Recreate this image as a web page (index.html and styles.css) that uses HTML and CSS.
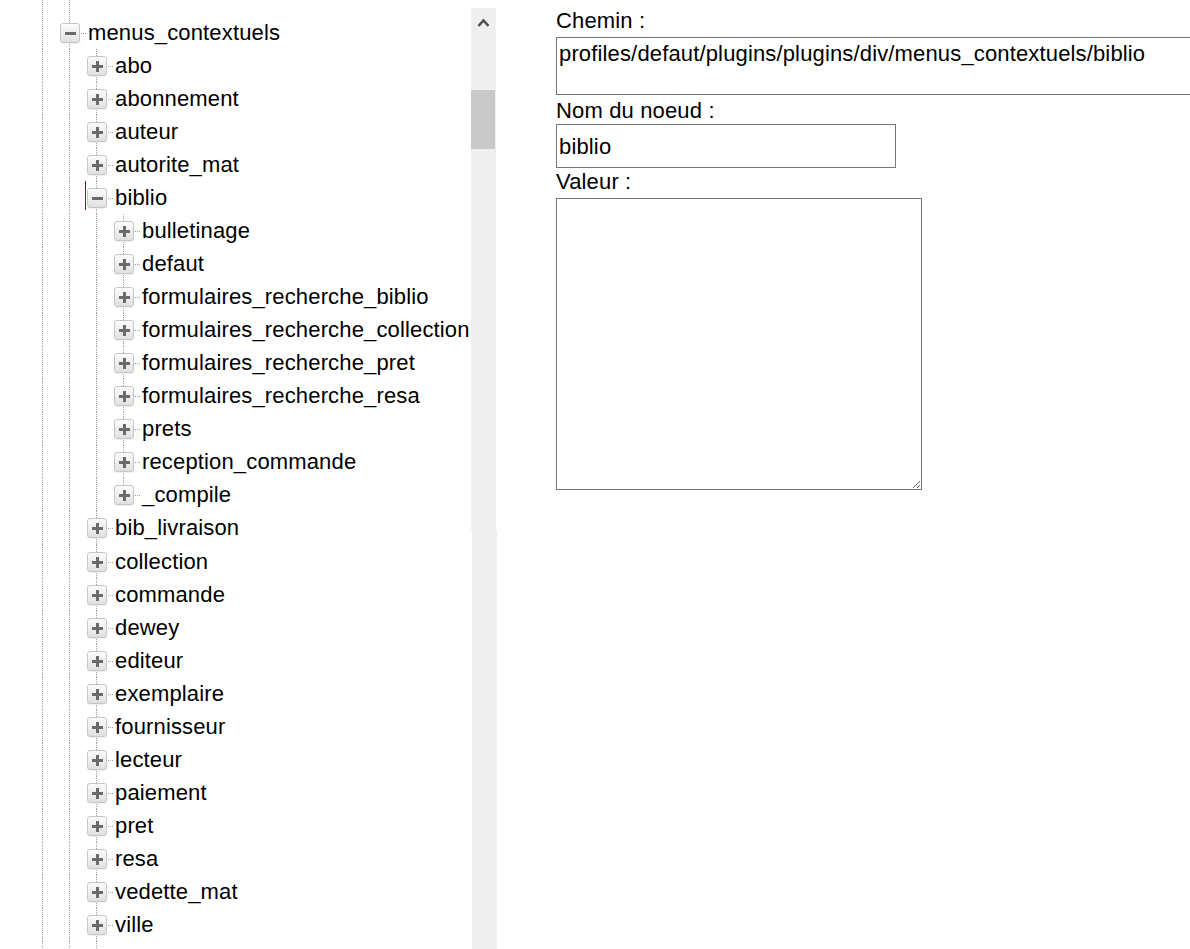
FILE: index.html
```html
<!DOCTYPE html>
<html lang="fr">
<head>
<meta charset="utf-8">
<title>Arbre des menus contextuels</title>
<link rel="stylesheet" href="styles.css">
</head>
<body>
<div class="page">
  <div class="left">
    <div class="tree">
      <div class="spacer top"><span class="g on"></span><span class="g on"></span></div>

      <div class="row"><span class="g on"></span><span class="x"><span class="ic minus"></span></span><span class="lb">menus_contextuels</span></div>

      <div class="row"><span class="g on"></span><span class="g on"></span><span class="x"><span class="ic plus"></span></span><span class="lb">abo</span></div>
      <div class="row"><span class="g on"></span><span class="g on"></span><span class="x"><span class="ic plus"></span></span><span class="lb">abonnement</span></div>
      <div class="row"><span class="g on"></span><span class="g on"></span><span class="x"><span class="ic plus"></span></span><span class="lb">auteur</span></div>
      <div class="row"><span class="g on"></span><span class="g on"></span><span class="x"><span class="ic plus"></span></span><span class="lb">autorite_mat</span></div>
      <div class="row"><span class="g on"></span><span class="g on cur"></span><span class="x"><span class="ic minus"></span></span><span class="lb">biblio</span></div>

      <div class="row"><span class="g on"></span><span class="g on"></span><span class="g on"></span><span class="x"><span class="ic plus"></span></span><span class="lb">bulletinage</span></div>
      <div class="row"><span class="g on"></span><span class="g on"></span><span class="g on"></span><span class="x"><span class="ic plus"></span></span><span class="lb">defaut</span></div>
      <div class="row"><span class="g on"></span><span class="g on"></span><span class="g on"></span><span class="x"><span class="ic plus"></span></span><span class="lb">formulaires_recherche_biblio</span></div>
      <div class="row"><span class="g on"></span><span class="g on"></span><span class="g on"></span><span class="x"><span class="ic plus"></span></span><span class="lb">formulaires_recherche_collection</span></div>
      <div class="row"><span class="g on"></span><span class="g on"></span><span class="g on"></span><span class="x"><span class="ic plus"></span></span><span class="lb">formulaires_recherche_pret</span></div>
      <div class="row"><span class="g on"></span><span class="g on"></span><span class="g on"></span><span class="x"><span class="ic plus"></span></span><span class="lb">formulaires_recherche_resa</span></div>
      <div class="row"><span class="g on"></span><span class="g on"></span><span class="g on"></span><span class="x"><span class="ic plus"></span></span><span class="lb">prets</span></div>
      <div class="row"><span class="g on"></span><span class="g on"></span><span class="g on"></span><span class="x"><span class="ic plus"></span></span><span class="lb">reception_commande</span></div>
      <div class="row"><span class="g on"></span><span class="g on"></span><span class="g on"></span><span class="x last"><span class="ic plus"></span></span><span class="lb">_compile</span></div>

      <div class="row"><span class="g on"></span><span class="g on"></span><span class="x"><span class="ic plus"></span></span><span class="lb">bib_livraison</span></div>
      <div class="gap"><span class="g on"></span><span class="g on"></span><span class="g on"></span></div>
      <div class="row"><span class="g on"></span><span class="g on"></span><span class="x"><span class="ic plus"></span></span><span class="lb">collection</span></div>
      <div class="row"><span class="g on"></span><span class="g on"></span><span class="x"><span class="ic plus"></span></span><span class="lb">commande</span></div>
      <div class="row"><span class="g on"></span><span class="g on"></span><span class="x"><span class="ic plus"></span></span><span class="lb">dewey</span></div>
      <div class="row"><span class="g on"></span><span class="g on"></span><span class="x"><span class="ic plus"></span></span><span class="lb">editeur</span></div>
      <div class="row"><span class="g on"></span><span class="g on"></span><span class="x"><span class="ic plus"></span></span><span class="lb">exemplaire</span></div>
      <div class="row"><span class="g on"></span><span class="g on"></span><span class="x"><span class="ic plus"></span></span><span class="lb">fournisseur</span></div>
      <div class="row"><span class="g on"></span><span class="g on"></span><span class="x"><span class="ic plus"></span></span><span class="lb">lecteur</span></div>
      <div class="row"><span class="g on"></span><span class="g on"></span><span class="x"><span class="ic plus"></span></span><span class="lb">paiement</span></div>
      <div class="row"><span class="g on"></span><span class="g on"></span><span class="x"><span class="ic plus"></span></span><span class="lb">pret</span></div>
      <div class="row"><span class="g on"></span><span class="g on"></span><span class="x"><span class="ic plus"></span></span><span class="lb">resa</span></div>
      <div class="row"><span class="g on"></span><span class="g on"></span><span class="x"><span class="ic plus"></span></span><span class="lb">vedette_mat</span></div>
      <div class="row"><span class="g on"></span><span class="g on"></span><span class="x"><span class="ic plus"></span></span><span class="lb">ville</span></div>
      <div class="spacer bottom"><span class="g on"></span><span class="g on"></span><span class="g on"></span></div>
    </div>
    <div class="sbcol">
      <div class="sb1">
        <div class="sb-arrow">
          <svg width="25" height="28" viewBox="0 0 25 28"><polyline points="7.5,18 12.5,12.5 17.5,18" fill="none" stroke="#505050" stroke-width="2.6" stroke-linejoin="miter"/></svg>
        </div>
        <div class="sb-thumb"></div>
      </div>
      <div class="sb2"></div>
    </div>
  </div>

  <div class="form">
    <label class="lbl" for="chemin">Chemin :</label>
    <textarea id="chemin" class="ta-path">profiles/defaut/plugins/plugins/div/menus_contextuels/biblio</textarea>
    <label class="lbl l2" for="nom">Nom du noeud :</label>
    <input id="nom" class="in-name" type="text" value="biblio">
    <label class="lbl l3" for="valeur">Valeur :</label>
    <textarea id="valeur" class="ta-value"></textarea>
  </div>
</div>
</body>
</html>
```
FILE: styles.css
```css
html, body {
  margin: 0;
  padding: 0;
  overflow: hidden;
  background: #ffffff;
}

.page {
  display: flex;
  align-items: flex-start;
  width: 1190px;
  height: 949px;
  overflow: hidden;
  font-family: "Liberation Sans", Arial, sans-serif;
  font-size: 22px;
  letter-spacing: 0.15px;
  color: #000;
}

.left {
  display: flex;
  height: 949px;
  flex: none;
}

/* ---------- tree ---------- */
.tree {
  width: 471px;
  height: 949px;
  overflow: hidden;
  padding-left: 33px;
  box-sizing: border-box;
  white-space: nowrap;
}

.spacer,
.gap {
  display: flex;
}
.spacer.top { height: 16px; }
.spacer.bottom { height: 40px; }
.gap { height: 1px; }

.row {
  display: flex;
  height: 33px;
}

.g {
  flex: none;
  width: 27px;
}

.g.on {
  background: repeating-linear-gradient(to bottom, #a0a0a0 0 1px, transparent 1px 2px) 9px 0 / 1px 100% no-repeat;
}

.g.on.cur {
  background:
    linear-gradient(#6b1d1d, #6b1d1d) 25px 0 / 1px 29px no-repeat,
    repeating-linear-gradient(to bottom, #a0a0a0 0 1px, transparent 1px 2px) 9px 0 / 1px 100% no-repeat;
}

.x {
  flex: none;
  width: 27px;
  display: flex;
  align-items: flex-start;
  background:
    repeating-linear-gradient(to right, #a0a0a0 0 1px, transparent 1px 2px) 21px 17px / 6px 1px no-repeat,
    repeating-linear-gradient(to bottom, #a0a0a0 0 1px, transparent 1px 2px) 9px 0 / 1px 100% no-repeat;
}

.x.last {
  background:
    repeating-linear-gradient(to right, #a0a0a0 0 1px, transparent 1px 2px) 21px 17px / 6px 1px no-repeat,
    repeating-linear-gradient(to bottom, #a0a0a0 0 1px, transparent 1px 2px) 9px 0 / 1px 8px no-repeat;
}

.ic {
  width: 20px;
  height: 20px;
  margin-top: 7px;
  box-sizing: border-box;
  border: 1px solid #c6c6c6;
  border-radius: 3px;
  box-shadow: 0 1px 0 rgba(0, 0, 0, 0.06);
}

.ic.minus {
  background:
    linear-gradient(#6a6a6a, #6a6a6a) center / 11px 3px no-repeat,
    linear-gradient(#fcfcfc, #e0e0e0);
}

.ic.plus {
  background:
    linear-gradient(#6a6a6a, #6a6a6a) center / 11px 3px no-repeat,
    linear-gradient(#6a6a6a, #6a6a6a) center / 3px 11px no-repeat,
    linear-gradient(#fcfcfc, #e0e0e0);
}

.lb {
  padding-left: 1px;
  line-height: 33px;
}

/* ---------- scrollbar ---------- */
.sbcol {
  flex: none;
  width: 26px;
  display: flex;
  flex-direction: column;
}

.sb1 {
  width: 25px;
  height: 522px;
  margin-top: 8px;
  background: #efefef;
  display: flex;
  flex-direction: column;
}

.sb-arrow {
  height: 28px;
}
.sb-arrow svg { display: block; }

.sb-thumb {
  width: 24px;
  height: 59px;
  margin-top: 54px;
  background: #c9c9c9;
}

.sb2 {
  flex: 1;
  width: 25px;
  margin-left: 1px;
  background: #efefef;
}

/* ---------- form ---------- */
.form {
  flex: none;
  width: 634px;
  overflow: hidden;
  margin-left: 59px;
  padding-top: 8px;
  display: flex;
  flex-direction: column;
  align-items: flex-start;
}

.lbl {
  display: block;
  height: 25px;
  line-height: 25px;
}
.lbl.l2 { margin-top: 3px; }
.lbl.l3 { margin-top: 1px; }

.ta-path,
.in-name,
.ta-value {
  display: block;
  flex: none;
  box-sizing: border-box;
  border: 1px solid #767676;
  border-radius: 0;
  font-family: "Liberation Sans", Arial, sans-serif;
  font-size: 22px;
  letter-spacing: 0.15px;
  color: #000;
  background: #fff;
  outline: none;
  margin: 0;
}

.ta-path {
  width: 700px;
  height: 58px;
  margin-top: 4px;
  padding: 3px 2px 1px;
  line-height: 25px;
  resize: none;
  overflow: hidden;
}

.in-name {
  width: 340px;
  height: 44px;
  margin-top: 1px;
  padding: 2px 2px 0;
}

.ta-value {
  width: 366px;
  height: 292px;
  margin-top: 4px;
  padding: 2px;
  line-height: 25px;
}
```
